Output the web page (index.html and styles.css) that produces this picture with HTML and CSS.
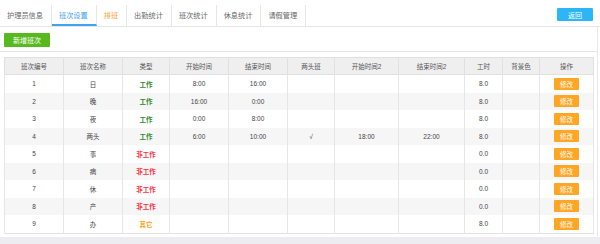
FILE: index.html
```html
<!DOCTYPE html>
<html lang="zh-CN">
<head>
  <meta charset="UTF-8" />
  <title>班次设置</title>
  <link rel="stylesheet" href="styles.css">
</head>
<body>
  <div class="tabbar">
    <div class="tabs">
      <span class="tab">护理员信息</span>
      <span class="tab active">班次设置</span>
      <span class="tab warn">排班</span>
      <span class="tab">出勤统计</span>
      <span class="tab">班次统计</span>
      <span class="tab">休息统计</span>
      <span class="tab">请假管理</span>
    </div>
    <button class="btn-back">返回</button>
  </div>

  <div class="panel">
    <div class="toolbar">
      <button class="btn-add">新增班次</button>
    </div>

    <table class="shift-table">
      <colgroup>
        <col style="width:59px"><col style="width:59px"><col style="width:47px">
        <col style="width:59px"><col style="width:59px"><col style="width:47px">
        <col style="width:64px"><col style="width:66px"><col style="width:38px">
        <col style="width:37px"><col style="width:54px">
      </colgroup>
      <thead>
        <tr>
          <th>班次编号</th><th>班次名称</th><th>类型</th><th>开始时间</th><th>结束时间</th>
          <th>两头班</th><th>开始时间2</th><th>结束时间2</th><th>工时</th><th>背景色</th><th>操作</th>
        </tr>
      </thead>
      <tbody>
        <tr><td>1</td><td>日</td><td class="work">工作</td><td>8:00</td><td>16:00</td><td></td><td></td><td></td><td>8.0</td><td></td><td><button class="btn-edit">修改</button></td></tr>
        <tr><td>2</td><td>晚</td><td class="work">工作</td><td>16:00</td><td>0:00</td><td></td><td></td><td></td><td>8.0</td><td></td><td><button class="btn-edit">修改</button></td></tr>
        <tr><td>3</td><td>夜</td><td class="work">工作</td><td>0:00</td><td>8:00</td><td></td><td></td><td></td><td>8.0</td><td></td><td><button class="btn-edit">修改</button></td></tr>
        <tr><td>4</td><td>两头</td><td class="work">工作</td><td>6:00</td><td>10:00</td><td>√</td><td>18:00</td><td>22:00</td><td>8.0</td><td></td><td><button class="btn-edit">修改</button></td></tr>
        <tr><td>5</td><td>事</td><td class="off">非工作</td><td></td><td></td><td></td><td></td><td></td><td>0.0</td><td></td><td><button class="btn-edit">修改</button></td></tr>
        <tr><td>6</td><td>病</td><td class="off">非工作</td><td></td><td></td><td></td><td></td><td></td><td>0.0</td><td></td><td><button class="btn-edit">修改</button></td></tr>
        <tr><td>7</td><td>休</td><td class="off">非工作</td><td></td><td></td><td></td><td></td><td></td><td>0.0</td><td></td><td><button class="btn-edit">修改</button></td></tr>
        <tr><td>8</td><td>产</td><td class="off">非工作</td><td></td><td></td><td></td><td></td><td></td><td>0.0</td><td></td><td><button class="btn-edit">修改</button></td></tr>
        <tr><td>9</td><td>办</td><td class="other">其它</td><td></td><td></td><td></td><td></td><td></td><td>8.0</td><td></td><td><button class="btn-edit">修改</button></td></tr>
      </tbody>
    </table>
  </div>
  <div class="footer-band"></div>
</body>
</html>
```

FILE: styles.css
```css
body {
  margin: 0;
  font-family: "Liberation Sans", "Noto Sans CJK SC", sans-serif;
  background: #fff;
  color: #555;
}

button {
  font-family: inherit;
  border: none;
  cursor: pointer;
  color: #fff;
  padding: 0;
}

.tabbar {
  display: flex;
  justify-content: space-between;
  align-items: flex-start;
  height: 27px;
  border-bottom: 1px solid #e6e6e6;
  box-sizing: border-box;
}

.tabs {
  display: flex;
  padding-top: 5px;
}

.tab {
  font-size: 7.2px;
  color: #666;
  height: 21px;
  line-height: 21px;
  padding: 0 8px 0 7px;
  border-right: 1px solid #e6e6e6;
}

.tab.active {
  color: #3ea2f2;
  border-bottom: 2px solid #3ea2f2;
  height: 19px;
}

.tab.warn {
  color: #f7a23a;
}

.btn-back {
  margin: 8px 7px 0 0;
  width: 36px;
  height: 13px;
  font-size: 7px;
  background: #2cb6f6;
  border-radius: 1px;
}

.panel {
  border-right: 1px solid #e8e8e8;
  width: 598px;
  box-sizing: border-box;
  height: 209px;
}

.toolbar {
  padding: 6px 4px 4px;
  border-bottom: 1px solid #e6e6e6;
  height: 14px;
}

.btn-add {
  width: 46px;
  height: 14px;
  font-size: 7px;
  background: #56ba1e;
  border-radius: 1px;
  display: block;
}

.shift-table {
  margin: 5px 0 0 4px;
  border-collapse: collapse;
  table-layout: fixed;
  width: 589px;
  font-size: 6.5px;
  border: 1px solid #e2e2e2;
}

.shift-table th {
  background: #efefef;
  font-weight: normal;
  color: #555;
  height: 16px;
  border: 1px solid #e0e0e0;
  padding: 0;
}

.shift-table td {
  text-align: center;
  height: 17.5px;
  padding: 0;
  border-left: 1px solid #e6e6e6;
  border-right: 1px solid #e6e6e6;
  color: #444;
}

.shift-table tbody tr:nth-child(even) td {
  background: #f6f6f6;
}

.shift-table td.work {
  color: #2a8a2a;
  font-weight: bold;
}

.shift-table td.off {
  color: #ff2e3e;
  font-weight: bold;
}

.shift-table td.other {
  color: #ffa31a;
  font-weight: bold;
}

.btn-edit {
  width: 25px;
  height: 12px;
  font-size: 6.5px;
  background: #ffa625;
  border-radius: 1px;
  vertical-align: middle;
}

.footer-band {
  margin-top: 1px;
  height: 8px;
  background: #ececf1;
}
```
